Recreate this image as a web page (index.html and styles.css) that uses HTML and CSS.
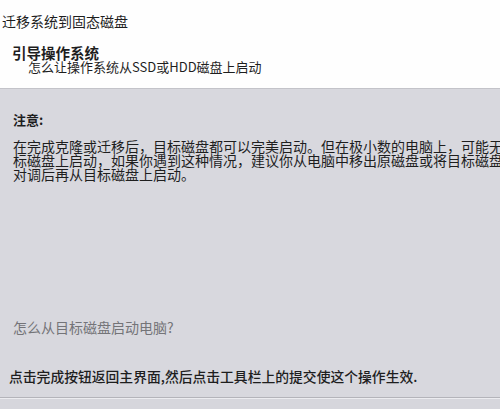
FILE: index.html
```html
<!DOCTYPE html>
<html lang="zh-CN">
<head>
<meta charset="UTF-8">
<link rel="stylesheet" href="styles.css">
<title>迁移系统到固态磁盘</title>
</head>
<body>
<div class="page">
<div class="head">
<div class="title">迁移系统到固态磁盘</div>
<div class="step">引导操作系统</div>
<div class="sub">怎么让操作系统从SSD或HDD磁盘上启动</div>
</div>
<div class="main">
<div class="note">注意:</div>
<div class="para">
<div class="line">在完成克隆或迁移后，目标磁盘都可以完美启动。但在极小数的电脑上，可能无法从目</div>
<div class="line">标磁盘上启动，如果你遇到这种情况，建议你从电脑中移出原磁盘或将目标磁盘与原磁盘</div>
<div class="line">对调后再从目标磁盘上启动。</div>
</div>
<div class="question">怎么从目标磁盘启动电脑?</div>
<div class="action">点击完成按钮返回主界面,然后点击工具栏上的提交使这个操作生效.</div>
</div>
<div class="foot"></div>
</div>
</body>
</html>
```
FILE: styles.css
```css
html,
body {
height: 100%;
margin: 0;
overflow: hidden;
}
body {
font-family: "Noto Sans CJK SC", "Liberation Sans", sans-serif;
color: #1e1e1e;
}
.page {
display: flex;
flex-direction: column;
width: 500px;
height: 409px;
}
.head {
height: 88px;
box-sizing: border-box;
background: #fefefe;
padding-top: 13px;
}
.title {
padding-left: 2px;
font-size: 14px;
line-height: 16px;
}
.step {
margin-top: 17px;
padding-left: 12px;
font-size: 14.5px;
font-weight: bold;
line-height: 14px;
}
.sub {
padding-left: 28px;
font-size: 13px;
line-height: 14px;
}
.main {
background: #d8d8de;
border-top: 1px solid #c3c3c9;
padding: 24px 0 14px 13px;
white-space: nowrap;
overflow: hidden;
}
.note {
font-size: 13px;
font-weight: bold;
line-height: 14px;
}
.para {
margin-top: 12px;
font-size: 14px;
line-height: 14px;
}
.question {
margin-top: 139px;
font-size: 14px;
line-height: 14px;
color: #747478;
}
.action {
margin-top: 35px;
margin-left: -4px;
font-size: 13.8px;
font-weight: 500;
line-height: 14px;
}
.foot {
flex: 1;
background: #d6d6dc;
border-top: 1px solid #b4b4ba;
box-shadow: inset 0 1px 0 #ececf0;
}
```
